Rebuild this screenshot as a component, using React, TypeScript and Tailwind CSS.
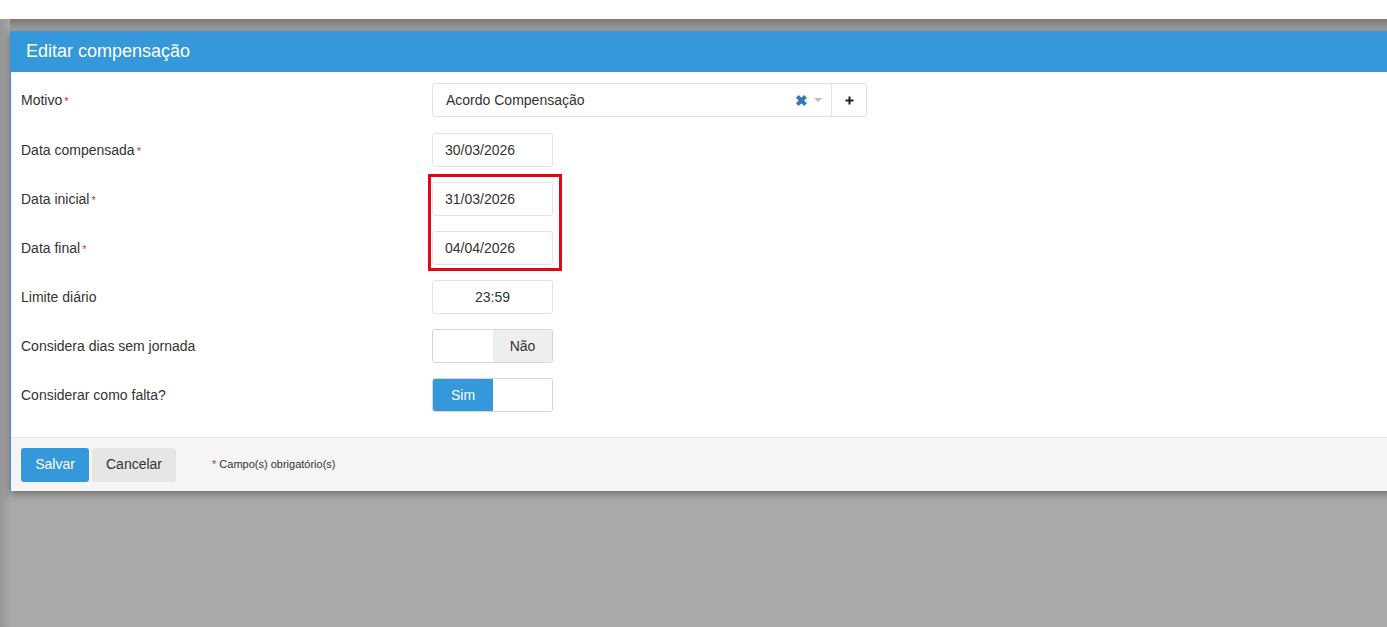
import React from 'react';

const font = { fontFamily: '"Liberation Sans", Arial, sans-serif' };

function Label({ text, req }: { text: string; req?: boolean }) {
  return (
    <div className="w-[411px] shrink-0 text-[14px] text-[#333]">
      {text}
      {req && <span className="ml-[2px] text-[11px] text-[#c0392b]">*</span>}
    </div>
  );
}

function DateBox({ value, center }: { value: string; center?: boolean }) {
  return (
    <div
      className={`flex h-[34px] w-[121px] items-center rounded-[3px] border border-[#e3e3e3] bg-white px-[12px] text-[14px] text-[#333] ${center ? 'justify-center' : ''}`}
    >
      {value}
    </div>
  );
}

function Toggle({ on }: { on: boolean }) {
  return (
    <div className="flex h-[34px] w-[121px] overflow-hidden rounded-[3px] border border-[#d6d6d6] bg-white text-[14px]">
      {on ? (
        <>
          <div className="flex w-[60px] items-center justify-center bg-[#3498db] text-white">Sim</div>
          <div className="flex-1" />
        </>
      ) : (
        <>
          <div className="w-[60px]" />
          <div className="flex flex-1 items-center justify-center bg-[#eeeeee] text-[#333]">Não</div>
        </>
      )}
    </div>
  );
}

export default function App() {
  return (
    <div className="flex h-[627px] w-full flex-col overflow-hidden bg-white" style={font}>
      <div className="h-[19px] shrink-0 bg-white" />
      <div className="relative flex-1 overflow-hidden bg-[#aaaaaa]">
        <div className="pointer-events-none absolute inset-x-0 top-0 h-[12px] bg-gradient-to-b from-[#7a7a7a] to-[#a2a2a2]" />
        <div className="pointer-events-none absolute inset-y-0 left-0 w-[10px] bg-gradient-to-r from-[#979797] to-[#a6a6a6]" />
        <div className="relative ml-[10px] mt-[12px] w-[1400px] border-l border-[#3498db] bg-white shadow-[0_3px_8px_rgba(0,0,0,0.35)]">
          <div className="flex h-[41px] items-center bg-[#3498db] pl-[15px] text-[18px] text-white">
            Editar compensação
          </div>

          <div className="flex flex-col gap-[15px] pb-[25px] pl-[10px] pt-[11px]">
            <div className="mb-[1px] flex items-center">
              <Label text="Motivo" req />
              <div className="flex h-[34px] w-[435px] rounded-[3px] border border-[#e3e3e3] bg-white">
                <div className="flex flex-1 items-center pl-[13px] text-[14px] text-[#333]">
                  <span className="flex-1">Acordo Compensação</span>
                  <span className="text-[15px] font-bold leading-none text-[#337ab7]">✖</span>
                  <svg width="8" height="5" viewBox="0 0 8 5" className="ml-[6px] mr-[9px]">
                    <path d="M0 0 L8 0 L4 4 Z" fill="#bbbbbb" />
                  </svg>
                </div>
                <div className="flex w-[35px] items-center justify-center border-l border-[#e3e3e3]">
                  <svg width="9" height="9" viewBox="0 0 9 9">
                    <path d="M4.5 0.5 V8.5 M0.5 4.5 H8.5" stroke="#222" strokeWidth="2" />
                  </svg>
                </div>
              </div>
            </div>

            <div className="flex items-center">
              <Label text="Data compensada" req />
              <DateBox value="30/03/2026" />
            </div>

            <div className="relative flex items-center">
              <Label text="Data inicial" req />
              <DateBox value="31/03/2026" />
              <div className="pointer-events-none absolute left-[407px] top-[-8px] h-[97px] w-[134px] border-[3px] border-[#e30613]" />
            </div>

            <div className="flex items-center">
              <Label text="Data final" req />
              <DateBox value="04/04/2026" />
            </div>

            <div className="flex items-center">
              <Label text="Limite diário" />
              <DateBox value="23:59" center />
            </div>

            <div className="flex items-center">
              <Label text="Considera dias sem jornada" />
              <Toggle on={false} />
            </div>

            <div className="flex items-center">
              <Label text="Considerar como falta?" />
              <Toggle on />
            </div>
          </div>

          <div className="flex h-[54px] items-center border-t border-[#e5e5e5] bg-[#f5f5f5] pl-[10px]">
            <button className="h-[34px] w-[68px] rounded-[3px] bg-[#3498db] text-[14px] text-white">Salvar</button>
            <button className="ml-[3px] h-[34px] w-[84px] rounded-[3px] bg-[#e6e6e6] text-[14px] text-[#333]">Cancelar</button>
            <span className="ml-[36px] text-[11px] text-[#333]">
              <span className="text-[#c0392b]">*</span> Campo(s) obrigatório(s)
            </span>
          </div>
        </div>
      </div>
    </div>
  );
}
